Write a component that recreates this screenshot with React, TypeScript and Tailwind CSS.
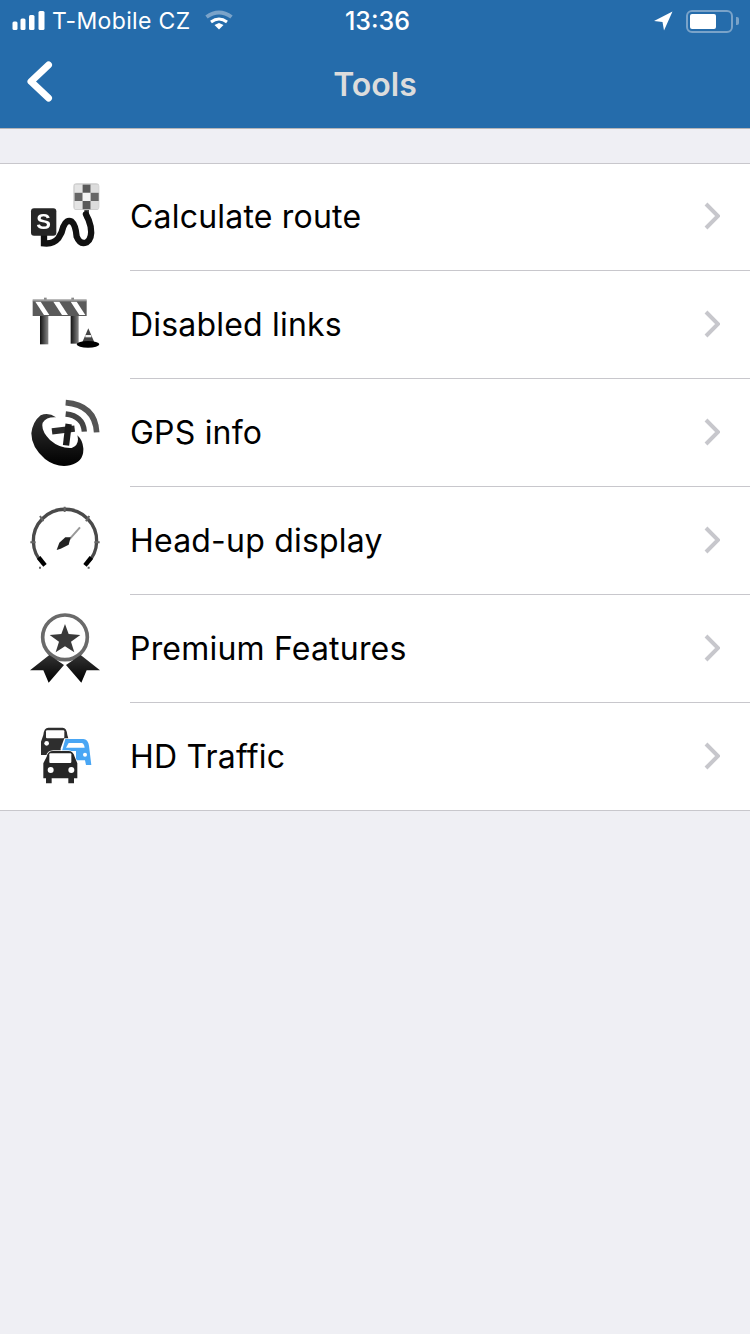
import type { ReactNode } from "react";

const font = { fontFamily: '"Inter", "Liberation Sans", sans-serif' };

function Z({ x, y, children }: { x: number; y: number; children: ReactNode }) {
  return <g transform={`translate(${x} ${y}) scale(0.3333)`}>{children}</g>;
}

function RouteIcon() {
  const cells = [
    [0, 0, "#e4e4e4"], [1, 0, "#5a5a5a"], [2, 0, "#dcdcdc"],
    [0, 1, "#666"], [1, 1, "#f4f4f4"], [2, 1, "#666"],
    [0, 2, "#e4e4e4"], [1, 2, "#5a5a5a"], [2, 2, "#dcdcdc"],
  ] as const;
  return (
    <Z x={20} y={175}>
      <path d="M200 100 L200 130" stroke="#444" strokeWidth="14" fill="none" />
      <rect x="160" y="25" width="78" height="80" rx="10" fill="#ccc" />
      {cells.map(([c, r, f]) => (
        <rect key={`${c}${r}`} x={164 + c * 24} y={29 + r * 24.5} width="24" height="24.5" fill={f} />
      ))}
      <path d="M72 175 L72 205 Q100 208 115 190 Q127 172 130 155 Q140 132 155 140 Q167 150 170 185 Q180 210 200 202 Q218 190 212 155 Q208 135 198 118" stroke="#111" strokeWidth="19" fill="none" strokeLinecap="round" />
      <rect x="33" y="100" width="76" height="82" rx="9" fill="#262626" />
      <text x="71" y="163" textAnchor="middle" fontSize="66" fontWeight="800" fill="#fff" fontFamily="Liberation Sans">S</text>
    </Z>
  );
}

function BarrierIcon() {
  return (
    <Z x={20} y={285}>
      <defs>
        <linearGradient id="leg" x1="0" x2="1" y1="0" y2="0">
          <stop offset="0" stopColor="#111" />
          <stop offset="1" stopColor="#888" />
        </linearGradient>
        <clipPath id="barclip"><rect x="38" y="47" width="162" height="46" /></clipPath>
      </defs>
      <rect x="72" y="38" width="8" height="10" fill="#888" />
      <rect x="154" y="38" width="8" height="10" fill="#888" />
      <rect x="60" y="92" width="25" height="86" fill="url(#leg)" />
      <rect x="152" y="92" width="24" height="84" fill="url(#leg)" />
      <rect x="38" y="47" width="162" height="46" fill="#5a5a5a" />
      <g clipPath="url(#barclip)" fill="#fff">
        <polygon points="46,50 62,50 88,90 72,90" />
        <polygon points="100,50 118,50 144,90 126,90" />
        <polygon points="152,50 170,50 196,90 178,90" />
      </g>
      <rect x="38" y="43" width="162" height="6" fill="#999" />
      <polygon points="205,130 224,174 186,174" fill="#444" />
      <rect x="196" y="150" width="18" height="7" fill="#eee" />
      <ellipse cx="204" cy="178" rx="34" ry="10" fill="#000" />
    </Z>
  );
}

function GpsIcon() {
  return (
    <Z x={20} y={390}>
      <defs>
        <linearGradient id="dish" x1="0" x2="0" y1="0" y2="1">
          <stop offset="0" stopColor="#333" />
          <stop offset="1" stopColor="#000" />
        </linearGradient>
      </defs>
      <path d="M62 76 Q38 95 34 130 Q34 172 75 207 Q110 234 150 226 Q192 216 190 175 Q188 150 172 136 Q180 165 155 174 Q120 176 90 150 Q62 122 68 98 Q80 80 108 82 Q85 66 62 76 Z" fill="url(#dish)" />
      <path d="M96 124 L164 116" stroke="#2a2a2a" strokeWidth="19" fill="none" />
      <path d="M146 102 L138 166" stroke="#1a1a1a" strokeWidth="19" fill="none" />
      <path d="M137 72 Q190 78 193 125" stroke="#444" strokeWidth="16" fill="none" />
      <path d="M137 38 Q225 45 230 127" stroke="#555" strokeWidth="17" fill="none" />
    </Z>
  );
}

function GaugeIcon() {
  return (
    <Z x={20} y={500}>
      <path d="M70 192 A95 95 0 1 1 200 192" stroke="#4a4a4a" strokeWidth="10" fill="none" />
      <path d="M56 172 L75 196" stroke="#000" strokeWidth="13" fill="none" />
      <path d="M214 172 L195 196" stroke="#000" strokeWidth="13" fill="none" />
      <path d="M134 20 V36 M60 48 L70 64 M208 48 L198 64 M31 127 H47 M239 127 H223 M60 200 v6 M206 200 v6" stroke="#666" strokeWidth="6" fill="none" />
      <path d="M180 82 L148 118" stroke="#999" strokeWidth="6" fill="none" />
      <polygon points="152,112 146,134 122,146 110,150 118,128 136,112" fill="#222" />
    </Z>
  );
}

function MedalIcon() {
  return (
    <Z x={20} y={605}>
      <defs>
        <linearGradient id="rib" x1="0" x2="0" y1="0" y2="1">
          <stop offset="0" stopColor="#333" />
          <stop offset="1" stopColor="#000" />
        </linearGradient>
      </defs>
      <circle cx="135" cy="97" r="67" stroke="#6a6a6a" strokeWidth="11" fill="none" />
      <polygon points="135,57 146,87 181,90 153,110 163,142 135,124 107,142 117,110 89,90 124,87" fill="#3a3a3a" />
      <polygon points="30,196 88,150 132,180 86,233 70,196" fill="url(#rib)" />
      <polygon points="240,196 182,150 138,180 184,233 200,196" fill="url(#rib)" />
    </Z>
  );
}

function TrafficIcon() {
  return (
    <Z x={20} y={715}>
      <path d="M70 60 Q72 38 85 38 H128 Q140 38 142 60 L148 80 V120 H63 V80 Z" fill="#2e2e2e" />
      <rect x="78" y="46" width="55" height="24" rx="3" fill="#fff" />
      <circle cx="80" cy="85" r="7" fill="#fff" />
      <path d="M122 100 L133 70 H192 Q207 72 210 95 L216 150 H196 V136 H122 Z" fill="#fff" />
      <path d="M136 72 H190 Q204 73 207 92 L214 150 H198 L195 136 H168 V108 H126 Z" fill="#49a6f4" />
      <path d="M146 84 H186 Q192 86 194 98 H138 Z" fill="#fff" />
      <circle cx="195" cy="119" r="6" fill="#fff" />
      <path d="M80 125 Q83 108 100 108 H145 Q160 108 164 125 L172 145 V190 H162 V205 H145 V190 H95 V205 H78 V190 H70 V145 Z" fill="#262626" stroke="#fff" strokeWidth="4" paintOrder="stroke" />
      <rect x="88" y="115" width="66" height="29" rx="3" fill="#fff" />
      <circle cx="92" cy="165" r="9" fill="#fff" />
      <circle cx="154" cy="165" r="9" fill="#fff" />
    </Z>
  );
}

const rows = [
  { label: "Calculate route", top: 164, h: 106, Icon: RouteIcon },
  { label: "Disabled links", top: 271, h: 107, Icon: BarrierIcon },
  { label: "GPS info", top: 379, h: 107, Icon: GpsIcon },
  { label: "Head-up display", top: 487, h: 107, Icon: GaugeIcon },
  { label: "Premium Features", top: 595, h: 107, Icon: MedalIcon },
  { label: "HD Traffic", top: 703, h: 107, Icon: TrafficIcon },
];

export default function App() {
  return (
    <div className="w-[750px] h-[1334px] bg-[#efeff4] flex flex-col overflow-hidden" style={font}>
      <header className="bg-[#256cab] h-[129px] border-b border-[#b5b5b8] flex flex-col shrink-0">
        <div className="h-[42px] grid grid-cols-3 items-center text-white">
          <div className="flex items-center pl-[12px]">
            <svg width="34" height="22" viewBox="0 0 34 22" className="shrink-0">
              <rect x="0.5" y="11.5" width="5" height="8.5" rx="1.5" fill="#fff" />
              <rect x="8.5" y="8.5" width="5" height="11.5" rx="1.5" fill="#fff" />
              <rect x="17" y="5" width="5.5" height="15" rx="1.5" fill="#fff" />
              <rect x="26.5" y="1" width="6" height="19" rx="1.5" fill="#fff" />
            </svg>
            <span className="ml-[6px] text-[23px] leading-none whitespace-nowrap tracking-[0.35px]">T-Mobile CZ</span>
            <svg width="30" height="22" viewBox="0 0 30 22" className="ml-[13px] shrink-0">
              <path d="M2.5 7 Q15 -2 27.5 7" stroke="#7aa3c9" strokeWidth="4" fill="none" />
              <path d="M7 12 Q15 6 23 12" stroke="#fff" strokeWidth="3" fill="none" />
              <polygon points="15,19.5 10.5,15 15,13 19.5,15" fill="#fff" />
            </svg>
          </div>
          <div className="text-center text-[25px] font-medium leading-none pl-[5px]">13:36</div>
          <div className="flex items-center justify-end pr-[11px]">
            <svg width="20" height="20" viewBox="0 0 20 20" className="mr-[13px] mb-[1px] shrink-0">
              <polygon points="1,10 19.5,0.5 11,19.5 9.5,11" fill="#fff" />
            </svg>
            <div className="w-[47px] h-[23px] rounded-[6px] border-2 border-[#7aa3c9] p-[2px] shrink-0">
              <div className="w-[26px] h-full bg-white rounded-[2px]" />
            </div>
            <div className="w-[3px] h-[8px] bg-[#7aa3c9] rounded-r-[2px] ml-[3px] shrink-0" />
          </div>
        </div>
        <div className="relative flex-1 flex items-center justify-center">
          <svg width="30" height="44" viewBox="0 0 30 44" className="absolute left-[25px] top-[18px]">
            <path d="M23.5 5 L6 21.5 L23.5 38" stroke="#fff" strokeWidth="7" strokeLinecap="round" strokeLinejoin="round" fill="none" />
          </svg>
          <h1 className="text-[32px] font-semibold text-[#dcdcdc] leading-none">Tools</h1>
        </div>
      </header>
      <ul className="mt-[34px] bg-white border-y border-[#c8c7cc]">
        {rows.map(({ label, top, h, Icon }, i) => (
          <li key={label} className="flex" style={{ height: i === rows.length - 1 ? h : h + 1 }}>
            <svg width="130" height={h} viewBox={`0 ${top} 130 ${h}`} className="shrink-0 blur-[0.5px]">
              <Icon />
            </svg>
            <div className={i === rows.length - 1 ? "flex-1 flex items-center justify-between pr-[30px]" : "flex-1 flex items-center justify-between border-b border-[#c8c7cc] pr-[30px]"}>
              <span className="text-[32px] leading-none text-black tracking-[0.2px]">{label}</span>
              <svg width="16" height="28" viewBox="0 0 16 28" className="shrink-0 mb-[2px]">
                <path d="M2 2 L14 14 L2 26" stroke="#c7c7cc" strokeWidth="4" fill="none" />
              </svg>
            </div>
          </li>
        ))}
      </ul>
    </div>
  );
}
